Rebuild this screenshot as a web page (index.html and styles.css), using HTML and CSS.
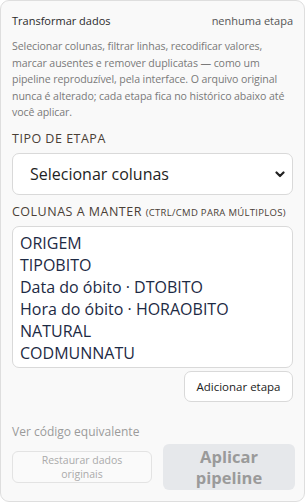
FILE: index.html
```html
<!DOCTYPE html>
<html lang="pt">
<head>
<meta charset="utf-8">
<link rel="stylesheet" href="styles.css">
</head>
<body>
<section class="card">
  <header class="head">
    <span class="title">Transformar dados</span>
    <span class="count">nenhuma etapa</span>
  </header>
  <p class="desc">Selecionar colunas, filtrar linhas, recodificar valores, marcar ausentes e remover duplicatas — como um pipeline reproduzível, pela interface. O arquivo original nunca é alterado; cada etapa fica no histórico abaixo até você aplicar.</p>

  <label class="label">Tipo de etapa</label>
  <div class="select-wrap">
    <select class="select">
      <option>Selecionar colunas</option>
    </select>
    <svg class="chev" width="10" height="7" viewBox="0 0 10 7"><path d="M1.5 1.5 L5 5 L8.5 1.5" fill="none" stroke="#222" stroke-width="2.2" stroke-linecap="round" stroke-linejoin="round"/></svg>
  </div>

  <label class="label">Colunas a manter <small>(Ctrl/Cmd para múltiplos)</small></label>
  <div class="list">
    <div class="opt">ORIGEM</div>
    <div class="opt">TIPOBITO</div>
    <div class="opt">Data do óbito · DTOBITO</div>
    <div class="opt">Hora do óbito · HORAOBITO</div>
    <div class="opt">NATURAL</div>
    <div class="opt">CODMUNNATU</div>
  </div>
  <div class="add-row">
    <button class="btn-add">Adicionar etapa</button>
  </div>

  <div class="code-link">Ver código equivalente</div>
  <div class="actions">
    <button class="btn-restore" disabled>Restaurar dados originais</button>
    <button class="btn-apply" disabled>Aplicar pipeline</button>
  </div>
</section>
</body>
</html>
```
FILE: styles.css
```css
* { box-sizing: border-box; }
html, body { margin: 0; padding: 0; background: #ffffff; }
body { font-family: "Open Sans", "Noto Sans", sans-serif; }

.card {
  width: 305px;
  height: 502px;
  border: 1px solid #dedede;
  border-radius: 9px;
  background: #f9f9f9;
  padding: 11px 11px 0 11px;
  display: flex;
  flex-direction: column;
}

.head {
  display: flex;
  justify-content: space-between;
  align-items: baseline;
  font-size: 11px;
  line-height: 18px;
}
.title { color: #2b2b2b; font-weight: 500; }
.count { color: #555; }

.desc {
  margin: 8px 0 0 0;
  font-size: 10.6px;
  letter-spacing: -0.1px;
  line-height: 16.5px;
  color: #7a7a7a;
}

.label {
  display: block;
  margin-top: 9px;
  font-size: 12.5px;
  line-height: 18px;
  color: #4a4036;
  text-transform: uppercase;
  letter-spacing: 0.5px;
}
.label small { font-size: 9.5px; letter-spacing: 0.3px; }

.select-wrap { position: relative; margin-top: 5px; }
.select {
  appearance: none;
  -webkit-appearance: none;
  width: 100%;
  height: 42px;
  border: 1px solid #d9d9d9;
  border-radius: 7px;
  background: #fff;
  font-family: inherit;
  font-size: 16px;
  color: #1f1f1f;
  padding: 0 0 0 17px;
}
.chev { position: absolute; right: 8px; top: 18px; }

.select-wrap + .label { margin-top: 8px; }

.list {
  margin-top: 4px;
  height: 142px;
  border: 1px solid #d9d9d9;
  border-radius: 7px;
  background: #fff;
  padding: 5px 7px;
  overflow: hidden;
}
.opt {
  font-size: 16px;
  line-height: 22px;
  color: #1d2a44;
}

.add-row { display: flex; justify-content: flex-end; margin-top: 3px; }
.btn-add {
  width: 109px;
  height: 31px;
  border: 1px solid #d9d9d9;
  border-radius: 7px;
  background: #fff;
  font-family: inherit;
  font-size: 11.5px;
  color: #222;
}

.code-link {
  margin-top: 22px;
  font-size: 12px;
  line-height: 16px;
  color: #9b9b9b;
}

.actions {
  display: grid;
  grid-template-columns: 140px 132px;
  column-gap: 11px;
  align-items: center;
  margin-top: 4px;
}
.btn-restore {
  height: 32px;
  border: 1px solid #e3e3e3;
  border-radius: 6px;
  background: #fafafa;
  font-family: inherit;
  font-size: 10.5px;
  line-height: 14px;
  color: #aaa;
  padding: 0 12px;
}
.btn-apply {
  height: 46px;
  border: none;
  border-radius: 6px;
  background: #e6e8eb;
  font-family: inherit;
  font-size: 16.5px;
  font-weight: 700;
  line-height: 21px;
  color: #9a9a9a;
  padding: 0 20px;
}
```
